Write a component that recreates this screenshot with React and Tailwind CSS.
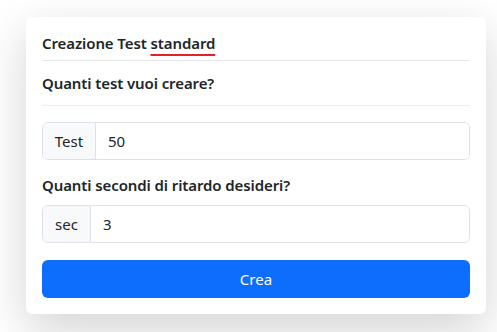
import React, { useState } from 'react';

export default function App() {
    const [tests, setTests] = useState('50');
    const [sec, setSec] = useState('3');

    return (
        <div className="min-h-[332px] bg-white pt-[17px] pl-[26px]" style={{ fontFamily: '"Noto Sans", "Open Sans", sans-serif' }}>
            <div className="w-[460px] bg-white rounded-md shadow-[0_1rem_3rem_rgba(0,0,0,0.175)] px-4 pt-4 pb-4 text-[#212529]">
                {/* titolo */}
                <div className="border-b border-[#e5e7ea] pb-[7px]">
                    <h5 className="text-[15px] leading-5 font-semibold tracking-[-0.1px]">
                        Creazione Test{' '}
                        <span className="underline decoration-[#e3202c] decoration-2 underline-offset-[5px]">standard</span>
                    </h5>
                </div>

                <div className="border-b border-[#eceef0] pt-[10px] pb-[10px]">
                    <label className="block text-[15px] leading-6 font-semibold tracking-[-0.1px]">Quanti test vuoi creare?</label>
                </div>

                <div className="mt-4 flex h-[38px] rounded-md border border-[#dee2e6] overflow-hidden">
                    <span className="flex items-center px-3 w-[53px] justify-center bg-[#f8f9fa] border-r border-[#dee2e6] text-[15px]">Test</span>
                    <input
                        value={tests}
                        onChange={(e) => setTests(e.target.value)}
                        className="flex-1 px-3 text-[15px] outline-none bg-white text-[#212529]"
                    />
                </div>

                <label className="block mt-[13px] mb-2 text-[15px] leading-6 font-semibold tracking-[-0.1px]">Quanti secondi di ritardo desideri?</label>
                <div className="flex h-[38px] rounded-md border border-[#dee2e6] overflow-hidden">
                    <span className="flex items-center px-3 w-[48px] justify-center bg-[#f8f9fa] border-r border-[#dee2e6] text-[15px]">sec</span>
                    <input
                        value={sec}
                        onChange={(e) => setSec(e.target.value)}
                        className="flex-1 px-3 text-[15px] outline-none bg-white text-[#212529]"
                    />
                </div>

                <button className="mt-[17px] w-full h-[38px] rounded-md bg-[#0d6efd] text-white text-[15px] hover:bg-[#0b5ed7]">
                    Crea
                </button>
            </div>
        </div>
    );
}
